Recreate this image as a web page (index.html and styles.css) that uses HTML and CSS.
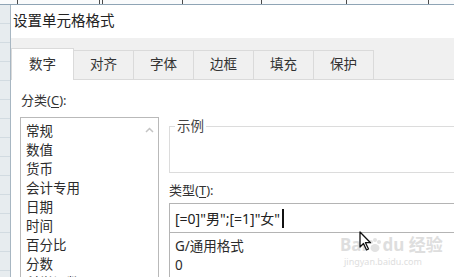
FILE: index.html
```html
<!DOCTYPE html>
<html lang="zh-CN">
<head>
    <meta charset="UTF-8">
    <title>设置单元格格式</title>
    <link rel="stylesheet" href="styles.css">
</head>
<body>

    <div class="sheet-top">
        <span class="cell" style="width:17px"></span>
        <span class="cell" style="width:81px"></span>
        <span class="cell" style="width:2px"></span>
        <span class="cell" style="width:79px"></span>
        <span class="cell" style="width:78px"></span>
        <span class="cell" style="width:84px"></span>
        <span class="cell" style="width:81px"></span>
    </div>

    <div class="main">
        <div class="sheet-left"></div>

        <div class="dialog">
            <div class="title">设置单元格格式</div>

            <div class="tabs">
                <div class="tab active">数字</div>
                <div class="tab">对齐</div>
                <div class="tab">字体</div>
                <div class="tab">边框</div>
                <div class="tab">填充</div>
                <div class="tab">保护</div>
            </div>

            <div class="content">
                <div class="left-col">
                    <div class="label">分类(<u>C</u>):</div>
                    <div class="listbox">
                        <div class="items">
                            <div>常规</div>
                            <div>数值</div>
                            <div>货币</div>
                            <div>会计专用</div>
                            <div>日期</div>
                            <div>时间</div>
                            <div>百分比</div>
                            <div>分数</div>
                            <div>科学记数</div>
                        </div>
                        <div class="scrollbar">
                            <svg width="9" height="6" viewBox="0 0 9 6"><path d="M1 5 L4.5 1.5 L8 5" fill="none" stroke="#c4c4c4" stroke-width="1.5"/></svg>
                        </div>
                    </div>
                </div>

                <div class="right-col">
                    <fieldset class="sample">
                        <legend>示例</legend>
                    </fieldset>
                    <div class="label type-label">类型(<u>T</u>):</div>
                    <div class="type-input">[=0]"男";[=1]"女"<span class="caret"></span></div>
                    <div class="type-list">
                        <div>G/通用格式</div>
                        <div>0</div>
                    </div>
                </div>
            </div>
        </div>
    </div>

    <div class="watermark">
        <div class="wm-logo">Bai<svg width="16" height="16" viewBox="0 0 16 16"><g fill="#e2e2e2"><circle cx="4" cy="5" r="2"/><circle cx="8" cy="3" r="2"/><circle cx="12" cy="5" r="2"/><ellipse cx="8" cy="11" rx="4.5" ry="4"/></g></svg>du 经验</div>
        <div class="wm-url">jingyan.baidu.com</div>
    </div>

    <svg class="cursor" width="14" height="21" viewBox="0 0 14 21">
        <path d="M1 1 L1 16 L4.5 12.5 L7.5 19 L9.5 18 L6.5 11.7 L11.5 11.7 Z" fill="#fff" stroke="#111" stroke-width="1.3" stroke-linejoin="round"/>
    </svg>

</body>
</html>
```

FILE: styles.css
```css
body {
    margin: 0;
    width: 454px;
    height: 277px;
    overflow: hidden;
    position: relative;
    font-family: "Noto Sans", "Noto Sans CJK SC", sans-serif;
    color: #2b2b2b;
    background-color: #fff;
}
.sheet-top {
    display: flex;
    height: 4px;
    background-color: #fafbfc;
    border-bottom: 1px solid #8fa4b5;
}
.sheet-top .cell {
    border-right: 1px solid #4a4a4a;
}
.main {
    display: flex;
    height: 272px;
}
.sheet-left {
    width: 10px;
    background-color: #e7ecef;
    background-image: repeating-linear-gradient(to bottom, transparent 0, transparent 18px, #d2dbe1 18px, #d2dbe1 19px);
}
.dialog {
    flex: 1;
    border-left: 1px solid #a7b6c2;
    background-color: #fff;
    display: flex;
    flex-direction: column;
    overflow: hidden;
}
.title {
    flex-shrink: 0;
    height: 33px;
    box-sizing: border-box;
    padding: 6px 0 0 2px;
    font-size: 14.5px;
    line-height: 18px;
    color: #222;
}
.tabs {
    flex-shrink: 0;
    display: flex;
    align-items: flex-end;
    height: 42px;
    box-sizing: border-box;
    background-color: #f0f0f0;
    border-bottom: 1px solid #dadada;
}
.tab {
    width: 61px;
    height: 29px;
    box-sizing: border-box;
    border: 1px solid #dadada;
    border-bottom: none;
    margin-left: -1px;
    background-color: #f0f0f0;
    font-size: 13.5px;
    line-height: 27px;
    text-align: center;
    color: #333;
}
.tab.active {
    width: 63px;
    height: 32px;
    margin-left: 0;
    margin-bottom: -1px;
    background-color: #fff;
    line-height: 30px;
    position: relative;
}
.content {
    display: flex;
    flex: 1;
    min-height: 0;
    padding: 12px 0 0 9px;
    font-size: 13px;
}
.label {
    line-height: 16px;
    padding-left: 1px;
    color: #333;
}
.label u {
    text-underline-offset: 2px;
}
.left-col {
    width: 139px;
    flex-shrink: 0;
}
.listbox {
    display: flex;
    margin-top: 9px;
    height: 170px;
    border: 1px solid #b9b9b9;
    border-bottom: none;
    overflow: hidden;
}
.items {
    flex: 1;
    padding: 4px 0 0 5px;
    line-height: 19px;
    font-size: 13.5px;
    color: #2b2b2b;
}
.scrollbar {
    width: 17px;
    display: flex;
    justify-content: center;
    padding-top: 9px;
}
.right-col {
    flex: 1;
    margin-left: 10px;
    margin-top: 26px;
}
.sample {
    margin: 0;
    padding: 0;
    height: 55px;
    box-sizing: border-box;
    border: 1px solid #dcdcdc;
    border-right: none;
}
.sample legend {
    margin-left: 5px;
    padding: 0 2px;
    font-size: 13.5px;
    line-height: 16px;
    color: #444;
}
.type-label {
    margin-top: 9px;
    padding-left: 0;
}
.type-input {
    display: flex;
    align-items: center;
    margin-top: 5px;
    height: 30px;
    box-sizing: border-box;
    padding-left: 5px;
    border: 1px solid #b4b4b4;
    border-right: none;
    font-size: 14px;
    color: #222;
}
.caret {
    display: inline-block;
    width: 2px;
    height: 19px;
    margin-left: 2px;
    background-color: #111;
}
.type-list {
    height: 60px;
    padding: 4px 0 0 5px;
    border-left: 1px solid #b4b4b4;
    font-size: 13.5px;
    line-height: 19px;
    color: #2b2b2b;
}
.watermark {
    position: absolute;
    left: 340px;
    top: 234px;
    color: #dedede;
}
.wm-logo {
    display: flex;
    align-items: center;
    font-size: 17px;
    line-height: 22px;
    font-weight: bold;
}
.wm-url {
    font-size: 9px;
    line-height: 12px;
    padding-left: 4px;
}
.cursor {
    position: absolute;
    left: 359px;
    top: 231px;
}
```
